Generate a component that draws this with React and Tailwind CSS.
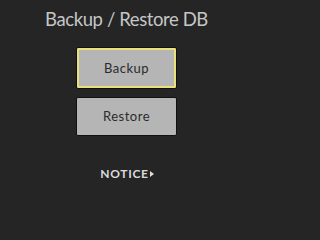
export default function App() {
  return (
    <div className="min-h-screen bg-[#252525]">
      <div className="w-[253px] h-[228px] flex flex-col items-center font-['Lato',sans-serif]">
        <h1 className="mt-[8px] text-[18.5px] leading-[23px] tracking-[-0.4px] text-[#c6c6c6]">Backup / Restore DB</h1>
        <button className="mt-[16px] w-[101px] h-[42px] rounded-[2px] border border-[#111] bg-[#b5b5b5] ring-2 ring-inset ring-[#e9e27a] text-[13px] tracking-[0.5px] text-[#2b2b2b] pt-[2px]">
          Backup
        </button>
        <button className="mt-[8px] w-[101px] h-[39px] rounded-[2px] border border-[#111] bg-[#b5b5b5] text-[13px] tracking-[0.5px] text-[#2b2b2b] pt-[1px]">
          Restore
        </button>
        <div className="mt-[29px] ml-[1px] flex items-center gap-[1px] text-[12px] font-bold tracking-[0.7px] text-[#dcdcdc]">
          NOTICE
          <span className="w-0 h-0 border-y-[3.5px] border-y-transparent border-l-[4px] border-l-[#dcdcdc]" />
        </div>
      </div>
    </div>
  );
}
